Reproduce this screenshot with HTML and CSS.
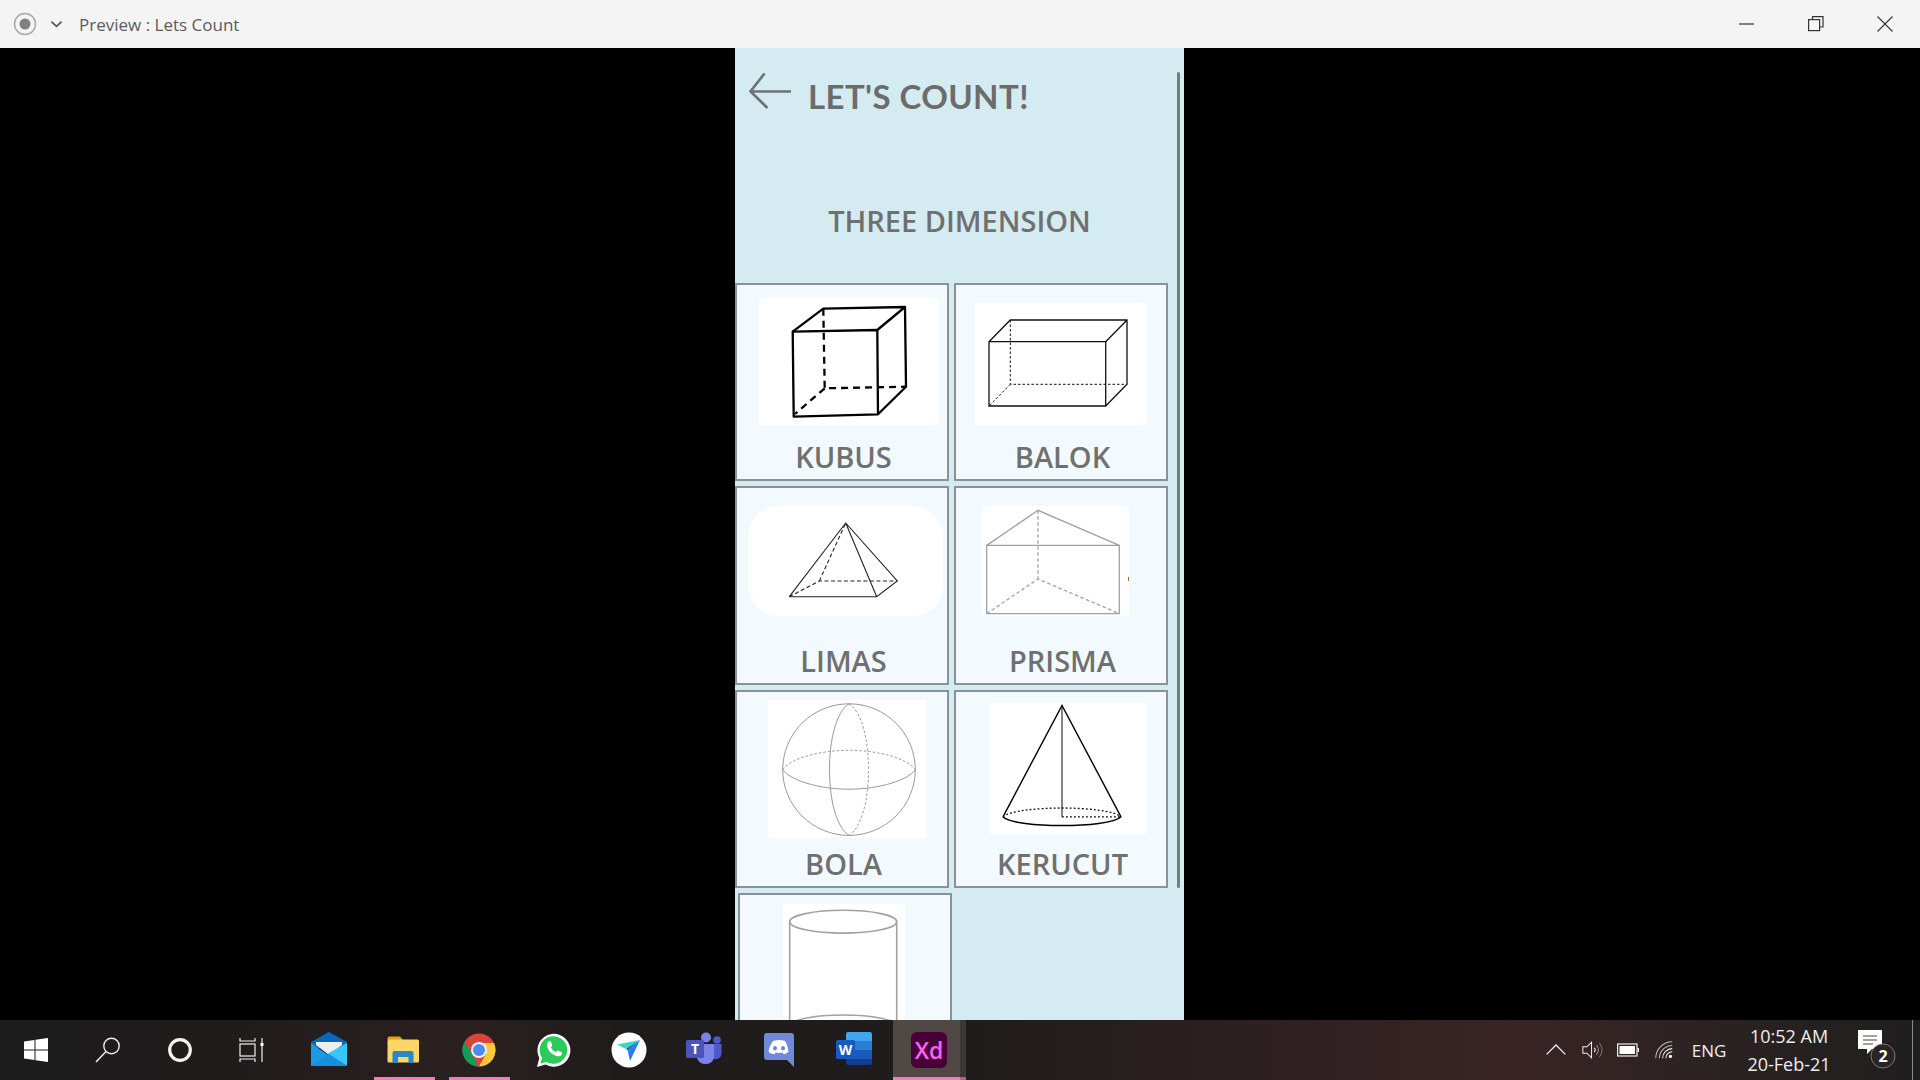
FILE: index.html
```html
<!DOCTYPE html>
<html lang="en">
<head>
  <meta charset="UTF-8">
  <title>Preview : Lets Count</title>
  <link rel="stylesheet" href="styles.css">
</head>
<body>

  <div class="titleBar">
    <svg class="recordIcon" viewBox="0 0 24 24"><circle cx="12" cy="12" r="10.500" fill="none" stroke="#a8a8a8" stroke-width="1.500"/><circle cx="12" cy="12" r="5.500" fill="#808080"/></svg>
    <svg class="menuChevron" viewBox="0 0 14 8"><path d="M1.500 1.500 7 6.500 12.500 1.500" fill="none" stroke="#555" stroke-width="1.800"/></svg>
    <span class="windowTitle">Preview : Lets Count</span>
    <div class="windowBtns">
      <svg viewBox="0 0 16 16"><path d="M0 8H15" stroke="#333" stroke-width="1.200"/></svg>
      <svg viewBox="0 0 16 16"><path d="M4.500 3V.6H15V11H12" fill="none" stroke="#333" stroke-width="1.200"/><rect x=".6" y="3.600" width="11" height="11" fill="none" stroke="#333" stroke-width="1.200"/></svg>
      <svg viewBox="0 0 16 16"><path d="M.5.5 15.500 15.500M15.500.5.5 15.500" stroke="#333" stroke-width="1.100"/></svg>
    </div>
  </div>

  <div class="stage">
    <div class="phone">
      <div class="scrollThumb"></div>

      <div class="appHeader">
        <svg class="backArrow" viewBox="0 0 44 38"><path d="M43 19.500H3M16.500 1.500 2.500 19.500 19.500 36" fill="none" stroke="#707070" stroke-width="2.600"/></svg>
        <h1>LET'S COUNT!</h1>
      </div>

      <h2 class="sectionTitle">THREE DIMENSION</h2>

      <div class="shapeGrid">

        <div class="shapeCard">
          <svg class="tile tileKubus" viewBox="0 0 180 127">
            <g fill="none" stroke="#000" stroke-width="2.300" stroke-linejoin="round">
              <path d="M33.700 33.700 118.300 32 119 116.300 34.700 118.700Z"/>
              <path d="M33.700 33.700 64.300 10.700 146 9 147 88.700 119 116.300M118.300 32 146 9"/>
              <path d="M64.300 10.700 65.700 90.300 147 88.700M65.700 90.300 36 116" stroke-dasharray="7 5"/>
            </g>
          </svg>
          <div class="shapeName">KUBUS</div>
        </div>

        <div class="shapeCard">
          <svg class="tile tileBalok" viewBox="0 0 172 122">
            <g fill="none" stroke="#111">
              <path d="M14 38.700H130.700V103H14ZM14 38.700 35.300 17H152V81.300L130.700 103M130.700 38.700 152 17" stroke-width="1.300"/>
              <path d="M35.300 17V81.300H152M35.300 81.300 14 103" stroke-width="1" stroke-dasharray="2.500 2"/>
            </g>
          </svg>
          <div class="shapeName">BALOK</div>
        </div>

        <div class="shapeCard">
          <svg class="tile tileLimas" viewBox="0 0 195 110">
            <g fill="none" stroke="#222" stroke-width="1.100">
              <path d="M41.300 90.700H128.700L149.300 75 97.700 17 41.300 90.700M97.700 17 128.700 90.700"/>
              <path d="M41.300 90.700 71.300 75H149.300M71.300 75 97.700 17" stroke-dasharray="4 2.500"/>
            </g>
          </svg>
          <div class="shapeName">LIMAS</div>
        </div>

        <div class="shapeCard">
          <svg class="tile tilePrisma" viewBox="0 0 147 110">
            <g fill="none" stroke="#a0a0a0" stroke-width="1.300">
              <path d="M4.700 39.400H137.300V107.600H4.700ZM4.700 39.400 56 4.300 137.300 39.400"/>
              <path d="M56 4.300V73M4.700 107.600 56 73 137.300 107.600" stroke-dasharray="3.500 2.500"/>
            </g>
            <path d="M146.500 71v4" stroke="#b5622c" stroke-width="1"/>
          </svg>
          <div class="shapeName">PRISMA</div>
        </div>

        <div class="shapeCard">
          <svg class="tile tileBola" viewBox="0 0 158 138">
            <g fill="none" stroke="#999" stroke-width="1">
              <ellipse cx="81" cy="69.600" rx="66.300" ry="65.800"/>
              <path d="M14.700 69.600C22 80 50 89.200 81 89.200S140 80 147.300 69.600"/>
              <path d="M81 3.800C68 12 61.500 40 61.500 69.600S68 127 81 135.400"/>
              <path d="M14.700 69.600C22 59 50 50.300 81 50.300S140 59 147.300 69.600M81 3.800C94 12 100.500 40 100.500 69.600S94 127 81 135.400" stroke-dasharray="2.500 2"/>
            </g>
          </svg>
          <div class="shapeName">BOLA</div>
        </div>

        <div class="shapeCard">
          <svg class="tile tileKerucut" viewBox="0 0 158 131">
            <path d="M73 2.500V113.800" stroke="#777" stroke-width="1.800"/>
            <g fill="none" stroke="#000">
              <path d="M14 113.800 73 2.500 132 113.800" stroke-width="1.400"/>
              <path d="M14 113.800C20 120 48 122.500 73 122.500S126 120 132 113.800" stroke-width="1.600"/>
              <path d="M14 113.800C20 108 48 105 73 105S126 108 132 113.800M73 113.800H132" stroke-width="1.300" stroke-dasharray="1.800 2.200"/>
            </g>
          </svg>
          <div class="shapeName">KERUCUT</div>
        </div>

        <div class="shapeCard lastCard">
          <svg class="tile tileTabung" viewBox="0 0 122 160">
            <g fill="none" stroke="#a2a2a2" stroke-width="1.600">
              <ellipse cx="60.200" cy="17.700" rx="53.500" ry="11.400"/>
              <path d="M6.700 17.700V122M113.700 17.700V122"/>
              <ellipse cx="60.200" cy="122" rx="53.500" ry="11"/>
            </g>
          </svg>
        </div>

      </div>
    </div>
  </div>

  <div class="taskbar">
    <div class="sysBtn">
      <svg class="iconWin" viewBox="0 0 24 24"><path fill="#fff" d="M0 3.400 10.500 2V11.400H0ZM11.500 1.800 24 0V11.400H11.500ZM0 12.600H10.500V22L0 20.600ZM11.500 12.600H24V24L11.500 22.200Z"/></svg>
    </div>
    <div class="sysBtn">
      <svg class="iconSys" viewBox="0 0 28 28"><circle cx="17.500" cy="10" r="7.700" fill="none" stroke="#eee" stroke-width="1.400"/><path d="M12 15.500 2 26" stroke="#eee" stroke-width="1.500"/></svg>
    </div>
    <div class="sysBtn">
      <svg class="iconSys" viewBox="0 0 28 28"><circle cx="14" cy="14" r="10.300" fill="none" stroke="#f4f4f4" stroke-width="3.200"/></svg>
    </div>
    <div class="sysBtn lastSys">
      <svg class="iconSys" viewBox="0 0 28 28" fill="none" stroke="#f0f0f0" stroke-width="1.200"><path d="M2 2V5H17V2M2 26V23H17V26"/><rect x="2" y="8" width="15" height="12"/><path d="M24 2V26"/><rect x="22.500" y="7" width="3" height="3" fill="#fff" stroke="none"/></svg>
    </div>

    <div class="appBtn">
      <svg viewBox="0 0 36 36">
        <path fill="#0a67b9" d="M0 10 18 0 36 10V16H0Z"/>
        <path fill="#eee" d="M5 10H31V13L18 23 5 13Z"/>
        <path fill="#1a9be6" d="M0 11 20 25 0 34Z"/>
        <path fill="#38c6fa" d="M36 11V34L16 22Z"/>
        <path fill="#1490df" d="M0 34 18 22 36 34Z"/>
      </svg>
    </div>
    <div class="appBtn running">
      <svg viewBox="0 0 36 36">
        <path fill="#e0a312" d="M1.500 6.500a2 2 0 0 1 2-2H14L17 8H1.500Z"/>
        <rect x="1.500" y="7.500" width="31.500" height="23" rx="1.500" fill="#fcd667"/>
        <path fill="#2a88c9" d="M6.500 31V21a2 2 0 0 1 2-2H25.500a2 2 0 0 1 2 2V31H22.500V25H12V31Z"/>
      </svg>
    </div>
    <div class="appBtn running">
      <svg viewBox="0 0 36 36">
        <circle cx="18" cy="18" r="16.500" fill="#db4437"/>
        <path fill="#0f9d58" d="M18 34.500A16.500 16.500 0 0 1 3.700 9.700L11 22 17.500 34.500Z"/>
        <path fill="#fdc83c" d="M18 11H33A16.500 16.500 0 0 1 18 34.500L25 22Z"/>
        <circle cx="18" cy="18" r="8" fill="#f2f2f2"/>
        <circle cx="18" cy="18" r="6" fill="#4a8bf0"/>
      </svg>
    </div>
    <div class="appBtn">
      <svg viewBox="0 0 36 36">
        <path fill="#fff" d="M1 35 3.300 26A16.500 16.500 0 1 1 9.500 32.500Z"/>
        <path fill="#2acb5b" d="M4.500 31.500 6 25.800A13.800 13.800 0 1 1 10.500 30Z"/>
        <path fill="#fff" d="M12.500 9.500c1-.8 2-.6 2.400.3l1.300 3c.2.600 0 1-.4 1.500l-.9 1c1 2.200 2.800 4 5 5l1.200-1.300c.4-.4.900-.5 1.400-.3l2.900 1.400c.8.400.9 1.300.3 2.300-1.200 2-3.400 2.300-6 1.300-4.300-1.600-7.400-5-8.500-8.800-.5-2.100.2-4.300 1.300-5.400Z"/>
      </svg>
    </div>
    <div class="appBtn">
      <svg viewBox="0 0 36 36">
        <circle cx="18" cy="18" r="17.500" fill="#fff"/>
        <path fill="#2a7df4" d="M29 8 19 29 16.800 19Z"/>
        <path fill="#1f5fd0" d="M29 8 16.800 19 15 16Z"/>
        <path fill="#37d6c6" d="M29 8 6 12.500 15 17Z"/>
      </svg>
    </div>
    <div class="appBtn">
      <svg viewBox="0 0 36 36">
        <circle cx="20" cy="5.500" r="5" fill="#7b83eb"/>
        <circle cx="31" cy="8" r="3.800" fill="#5059c9"/>
        <path fill="#5059c9" d="M25 12H35.500V22a6 6 0 0 1-10.500 3Z"/>
        <path fill="#7b83eb" d="M11 12H28V26a9 9 0 0 1-17 0Z"/>
        <rect x="0" y="8" width="18" height="18" rx="1.500" fill="#4b53bc"/>
        <text class="teamsT" x="9" y="22">T</text>
      </svg>
    </div>
    <div class="appBtn">
      <svg viewBox="0 0 36 36">
        <path fill="#7289da" d="M6 1H30a3 3 0 0 1 3 3V35L26 28H6a3 3 0 0 1-3-3V4A3 3 0 0 1 6 1Z"/>
        <path fill="#fff" d="M12 9c2-.8 4-1 6-1s4 .2 6 1c2 3 3.400 7 3.400 11-1.600 1.300-3.400 2-4.900 2.300l-1-1.800c-2.500.6-4.500.6-7 0l-1 1.800C11 22 9.200 21.300 7.600 20 7.600 16 10 12 12 9Z"/>
        <ellipse cx="14" cy="16.300" rx="2" ry="2.300" fill="#7289da"/>
        <ellipse cx="22" cy="16.300" rx="2" ry="2.300" fill="#7289da"/>
      </svg>
    </div>
    <div class="appBtn">
      <svg viewBox="0 0 36 36">
        <path fill="#41a5ee" d="M10 2a2 2 0 0 1 2-2H34a2 2 0 0 1 2 2V9H10Z"/>
        <rect x="10" y="9" width="26" height="9" fill="#2b7cd3"/>
        <rect x="10" y="18" width="26" height="9" fill="#185abd"/>
        <path fill="#103f91" d="M10 27H36V31a2 2 0 0 1-2 2H12a2 2 0 0 1-2-2Z"/>
        <rect x="0" y="8" width="19" height="19" rx="1.500" fill="#185abd"/>
        <text class="wordW" x="9.500" y="22.500">W</text>
      </svg>
    </div>
    <div class="appBtn active">
      <div class="xdIcon">Xd</div>
    </div>
    <div class="activeEdge"></div>

    <div class="tray">
      <svg class="trayIcon" viewBox="0 0 20 20"><path d="M1.500 14 10 5.500 18.500 14" fill="none" stroke="#eee" stroke-width="1.200"/></svg>
      <svg class="trayIcon" viewBox="0 0 24 24" fill="none" stroke="#eee" stroke-width="1.100"><path d="M2 8.500H6.500L11.500 3.500V20.500L6.500 15.500H2Z"/><path d="M14.500 9.500a4 4 0 0 1 0 5"/><path d="M17 7a8 8 0 0 1 0 10" stroke="#999"/><path d="M20 4.500a11 11 0 0 1 0 15" stroke="#777"/></svg>
      <svg class="trayIcon" viewBox="1 1 22 22"><rect x="1.600" y="6" width="19.400" height="12" fill="none" stroke="#eee" stroke-width="1.200"/><rect x="3.500" y="8" width="15.500" height="8" fill="#fff"/><rect x="21.500" y="10" width="1.500" height="4" fill="#eee"/></svg>
      <svg class="trayIcon" viewBox="0 0 24 24" fill="none" stroke="#bbb" stroke-width="1.100"><path d="M3 21A18 18 0 0 1 21 3"/><path d="M7 21A14 14 0 0 1 21 7"/><path d="M10.500 21A10.500 10.500 0 0 1 21 10.500" stroke="#eee"/><path d="M14 21A7 7 0 0 1 21 14" stroke="#eee"/><circle cx="19" cy="19" r="1.800" fill="#fff" stroke="none"/></svg>
      <span class="lang">ENG</span>
      <div class="clock">
        <span>10:52 AM</span>
        <span>20-Feb-21</span>
      </div>
      <svg class="notifIcon" viewBox="0 0 44 44">
        <path fill="#fff" d="M2 2H26V21H16L11 26V21H2Z"/>
        <path d="M7 8H21M7 12H21M7 16H17" stroke="#444" stroke-width="1"/>
        <circle cx="27" cy="28" r="12" fill="#2a2523" stroke="#777" stroke-width="1"/>
        <text class="notifCount" x="27" y="34">2</text>
      </svg>
      <div class="showDesktop"></div>
    </div>
  </div>

</body>
</html>
```
FILE: styles.css
```css
* { box-sizing: border-box; }
html, body {
  margin: 0;
  padding: 0;
  height: 100%;
}
body {
  display: flex;
  flex-direction: column;
  height: 100vh;
  overflow: hidden;
  background: #000;
  font-family: 'Open Sans', sans-serif;
}

/* window chrome */
.titleBar {
  height: 48px;
  flex: none;
  display: flex;
  align-items: center;
  background: #f4f4f4;
  padding-left: 13px;
}
.recordIcon {
  width: 24px;
  height: 24px;
}
.menuChevron {
  width: 13px;
  height: 8px;
  margin-left: 13px;
}
.windowTitle {
  margin-left: 16px;
  font-size: 17px;
  color: #5c5c5c;
}
.windowBtns {
  margin-left: auto;
  display: flex;
  gap: 53px;
  padding-right: 27px;
}
.windowBtns svg {
  width: 16px;
  height: 16px;
}

/* black area + phone frame */
.stage {
  flex: 1;
  min-height: 0;
  display: flex;
  justify-content: center;
}
.phone {
  position: relative;
  width: 449px;
  margin-left: -1px;
  background: #d4ebf1;
  overflow: hidden;
}
.scrollThumb {
  position: absolute;
  top: 24px;
  right: 4px;
  width: 3px;
  height: 816px;
  border-radius: 2px;
  background: #7b7b7b;
}
.appHeader {
  height: 80px;
  display: flex;
  align-items: flex-start;
  padding: 24px 0 0 13px;
}
.backArrow {
  width: 44px;
  height: 38px;
}
.appHeader h1 {
  margin: 0 0 0 16px;
  font-family: 'Comic Sans MS', 'Lato', sans-serif;
  font-size: 33px;
  font-weight: 700;
  letter-spacing: .4px;
  line-height: 48px;
  color: #6c6c6c;
}
.sectionTitle {
  margin: 0;
  height: 155px;
  padding-top: 73px;
  text-align: center;
  font-size: 29px;
  font-weight: 600;
  line-height: 40px;
  color: #707070;
}

/* shapes */
.shapeGrid {
  display: grid;
  grid-template-columns: 214px 214px;
  grid-auto-rows: 198.400px;
  column-gap: 5px;
  row-gap: 5px;
}
.shapeCard {
  display: flex;
  flex-direction: column;
  align-items: flex-start;
  background: #f2faff;
  border: 2px solid #8a9296;
}
.lastCard {
  margin: 0 -3px 0 3px;
}
.shapeName {
  margin-top: auto;
  align-self: center;
  padding: 0 0 3px 3px;
  font-size: 29px;
  font-weight: 600;
  line-height: 38px;
  color: #707070;
}
.tile {
  flex: none;
  background: #fff;
}
.tileKubus { width: 180px; height: 127px; margin: 13px 0 0 22px; }
.tileBalok { width: 172px; height: 122px; margin: 18px 0 0 19px; }
.tileLimas { width: 195px; height: 110px; margin: 18px 0 0 11px; border-radius: 30px; }
.tilePrisma { width: 147px; height: 110px; margin: 18px 0 0 26px; }
.tileBola { width: 158px; height: 138px; margin: 8px 0 0 31px; }
.tileKerucut { width: 158px; height: 131px; margin: 11px 0 0 33px; }
.tileTabung { width: 122px; height: 160px; margin: 9px 0 0 43px; }

/* taskbar */
.taskbar {
  height: 60px;
  flex: none;
  display: flex;
  background: linear-gradient(90deg, #1c1c1c 0%, #201c1c 12%, #2a201f 24%, #1e1c1b 32%, #1f1c1b 50%, #2a1f1f 62%, #3a2425 79%, #2c2322 88%, #1f1e1e 100%);
  color: #eee;
}
.sysBtn {
  width: 72px;
  display: flex;
  align-items: center;
  justify-content: center;
}
.lastSys {
  margin-right: 3px;
}
.iconWin {
  width: 24px;
  height: 24px;
}
.iconSys {
  width: 28px;
  height: 28px;
}
.appBtn {
  position: relative;
  width: 75px;
  display: flex;
  align-items: center;
  justify-content: center;
}
.appBtn svg {
  width: 36px;
  height: 36px;
}
.appBtn.running::after,
.appBtn.active::after {
  content: "";
  position: absolute;
  left: 8px;
  right: 6px;
  bottom: 0;
  height: 3px;
  background: #f07fb8;
}
.appBtn.active {
  width: 67px;
  margin-left: 2px;
  padding-left: 5px;
  background: #4f4845;
}
.appBtn.active::after {
  left: 0;
  right: 0;
}
.activeEdge {
  width: 6px;
  background: #3c3735;
  border-bottom: 3px solid #b0658c;
}
.xdIcon {
  width: 36px;
  height: 36px;
  border-radius: 6px;
  background: #470137;
  color: #ff61f6;
  font-family: 'Open Sans', sans-serif;
  font-size: 23px;
  font-weight: 600;
  line-height: 36px;
  text-align: center;
}
.teamsT, .wordW {
  fill: #fff;
  font-family: 'Open Sans', sans-serif;
  font-weight: 700;
  font-size: 14px;
  text-anchor: middle;
}
.tray {
  margin-left: auto;
  display: flex;
  align-items: center;
}
.trayIcon {
  width: 22px;
  height: 22px;
  margin-right: 14px;
}
.lang {
  width: 40px;
  font-size: 17px;
  text-align: center;
}
.clock {
  width: 116px;
  margin-left: 2px;
  display: flex;
  flex-direction: column;
  align-items: center;
  font-size: 18px;
  line-height: 28px;
}
.notifIcon {
  width: 44px;
  height: 44px;
  margin-left: 9px;
}
.notifCount {
  fill: #fff;
  font-family: 'Open Sans', sans-serif;
  font-size: 16px;
  font-weight: 700;
  text-anchor: middle;
}
.showDesktop {
  width: 1px;
  height: 100%;
  margin: 0 7px 0 12px;
  background: #888;
}
```
